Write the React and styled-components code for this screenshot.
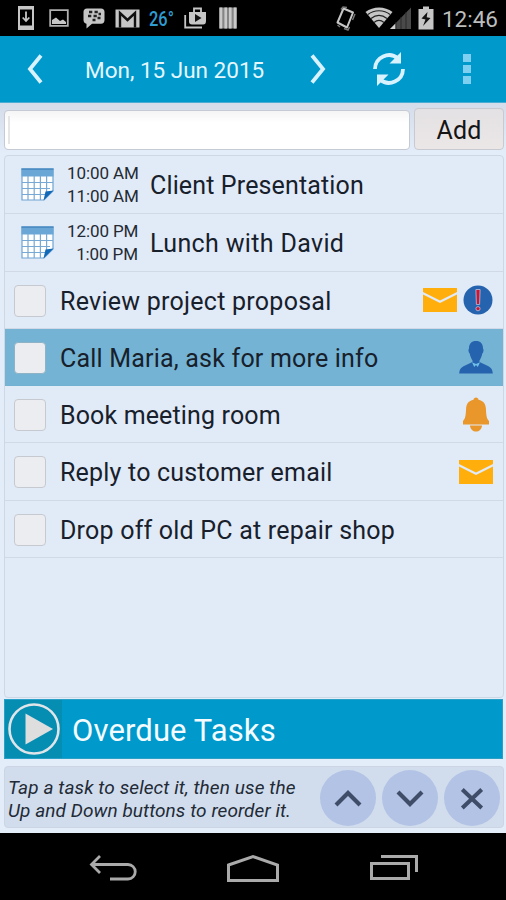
import React from 'react';
import { styled, createGlobalStyle } from 'styled-components';

const events = [
  { start: '10:00 AM', end: '11:00 AM', title: 'Client Presentation', spacing: 0.14 },
  { start: '12:00 PM', end: '1:00 PM', title: 'Lunch with David', spacing: 0.35 },
];

const tasks = [
  { title: 'Review project proposal', icons: ['mail', 'alert'], height: 57, spacing: 0.26 },
  { title: 'Call Maria, ask for more info', icons: ['contact'], selected: true, height: 57, spacing: 0.2 },
  { title: 'Book meeting room', icons: ['bell'], height: 57, spacing: 0.14 },
  { title: 'Reply to customer email', icons: ['mail'], height: 58, spacing: 0.2 },
  { title: 'Drop off old PC at repair shop', icons: [], height: 57, spacing: 0.21 },
];

const MailIcon = () => (
  <svg width="34" height="24" viewBox="0 0 34 24">
    <path d="M0 0H34V4L17 12.5L0 4Z" fill="#ffae0c" />
    <path d="M0 6.5L17 15L34 6.5V24H0Z" fill="#ffae0c" />
  </svg>
);

const AlertIcon = () => (
  <svg width="30" height="30" viewBox="0 0 30 30">
    <circle cx="15" cy="15" r="14.5" fill="#2563ae" />
    <path d="M12.9 4.5H17.1L16.6 19.5H13.4Z" fill="#cf1430" stroke="#a9b5d8" strokeWidth="0.9" />
    <circle cx="15" cy="23.7" r="2.1" fill="#cf1430" stroke="#a9b5d8" strokeWidth="0.9" />
  </svg>
);

const ContactIcon = () => (
  <svg width="34" height="34" viewBox="0 0 34 34">
    <path
      d="M17 1C21.5 1 24 3.5 24 8.5C25 9.5 24.5 12.5 23.3 13.5C22.7 16.5 21.5 19 20.5 20.5V22L29 26C32.5 27.8 33.5 30 33.8 33.5H0.2C0.5 30 1.5 27.8 5 26L13.5 22V20.5C12.5 19 11.3 16.5 10.7 13.5C9.500 12.500 9 9.500 10 8.500C10 3.500 12.500 1 17 1Z"
      fill="#2563ae"
    />
    <path d="M13 22.300L17 24L21 22.300L18.800 27L17 25L15.200 27Z" fill="#6fc0e8" />
  </svg>
);

const BellIcon = () => (
  <svg width="28" height="35" viewBox="0 0 28 35">
    <path
      d="M14 0.5C15.5 0.5 16.3 1.5 16.5 2.700C21.500 3.700 23.700 7 23.900 11.500C24.200 18 24.500 21.500 27 24V27.500H1V24C3.500 21.500 3.800 18 4.100 11.500C4.300 7 6.500 3.700 11.500 2.700C11.700 1.500 12.500 0.500 14 0.500Z"
      fill="#e9962b"
    />
    <path d="M8 28.500H20C19.500 32.500 17 34.500 14 34.500C11 34.500 8.500 32.500 8 28.500Z" fill="#e9962b" />
  </svg>
);

const taskIcons = {
  mail: MailIcon,
  alert: AlertIcon,
  contact: ContactIcon,
  bell: BellIcon,
};

const CalendarIcon = () => (
  <svg width="33" height="33" viewBox="0 0 33 33">
    <path d="M1 1H32V23L23 32H1Z" fill="#fff" stroke="#6fa4d3" strokeWidth="1.2" />
    <path d="M0.5 0.5H32.5V8.5H0.5Z" fill="#6ba7d6" />
    <path d="M0.5 0.5H32.5V1.8H0.5Z" fill="#4585bd" />
    <path
      d="M1 14.5H32M1 20.5H29M1 26.5H24M7 8V32M13.2 8V32M19.4 8V32M25.6 8V24"
      stroke="#78a9d5"
      strokeWidth="1.2"
      fill="none"
    />
    <path d="M22.5 32.5L24.5 23.5L32.5 22.5Z" fill="#1269b8" />
  </svg>
);

const StatusLeft = () => (
  <LeftIcons>
    <svg width="18" height="26" viewBox="0 0 18 26">
      <path d="M1 1H17V25H1Z" fill="#c6c6c6" />
      <path d="M3 4.5H15V20.5H3Z" fill="#000" />
      <path d="M9 6.5V16M5.7 12.5L9 16L12.3 12.5" fill="none" stroke="#c6c6c6" strokeWidth="1.8" />
    </svg>
    <svg width="20" height="18" viewBox="0 0 20 18">
      <path d="M1.2 1.2H18.8V16.8H1.2Z" fill="none" stroke="#b0b0b0" strokeWidth="1.8" />
      <path d="M3 15V11L7 8.5L11 12L14 10.5L17 13V15Z" fill="#c6c6c6" />
    </svg>
    <svg width="22" height="21" viewBox="0 0 22 21">
      <path d="M4 0.5H18Q21.5 0.5 21.5 4V12Q21.5 15.7 18 15.7H9L3.5 20.5V15.7Q0.5 15 0.5 12V4Q0.5 0.5 4 0.5Z" fill="#c6c6c6" />
      <path d="M6 4H9.3M11.5 4H14.8M5 8H8.3M10.5 8H13.8M15.5 6H18M9.5 12H12.5M14.5 10H17.5" stroke="#222" strokeWidth="2.4" />
    </svg>
    <svg width="25" height="19" viewBox="0 0 25 19">
      <path d="M0.5 0.5H24.5V18.5H0.5Z" fill="#c6c6c6" />
      <path d="M5 18.5V4L12.5 11L20 4V18.5" fill="none" stroke="#111" strokeWidth="2.4" />
    </svg>
    <Temperature>26°</Temperature>
    <svg width="23" height="22" viewBox="0 0 23 22">
      <path d="M1.2 8V20.5H18" fill="none" stroke="#c6c6c6" strokeWidth="1.8" />
      <path d="M5 5H22V14Q22 17.5 19 17.5H8Q5 17.5 5 14.5Z" fill="#c6c6c6" />
      <path d="M10 5V1.5H17V5" fill="none" stroke="#c6c6c6" strokeWidth="1.8" />
      <path d="M11 7L17.5 11L11 15Z" fill="#111" />
    </svg>
    <svg width="18" height="22" viewBox="0 0 18 22">
      <path d="M0 0.5H18V21.5H0Z" fill="#858585" />
      <path d="M2 0.5V21.5M6.7 0.5V21.5M11.3 0.5V21.5M16 0.5V21.5" stroke="#c9c9c9" strokeWidth="2.6" />
    </svg>
  </LeftIcons>
);

const StatusRight = () => (
  <RightIcons>
    <svg width="22" height="25" viewBox="0 0 22 25">
      <path d="M8.5 2.5L18 6.5L12 21.5L2.5 16.5Z" fill="none" stroke="#c6c6c6" strokeWidth="2" strokeLinejoin="round" />
      <path d="M6 3.5L8 1L12 1.5M20 8L17.5 14M2.5 19L5 21M9 22.5L13 24L14.5 21" fill="none" stroke="#777" strokeWidth="1.5" />
    </svg>
    <Wifi width="47" height="23" viewBox="0 0 47 23">
      <path d="M14 21L0.5 5C8 -1 20 -1 27.5 5Z" fill="#c6c6c6" />
      <path d="M3 7.5C9 2.5 19 2.5 25 7.5M6 11.5C11 7.5 17 7.5 22 11.5M9 15.5C12 13 16 13 19 15.5" fill="none" stroke="#222" strokeWidth="1.2" />
      <path d="M46 0.5V22H25Z" fill="#4a4a4a" />
      <path d="M30.5 16.5V22H25Z" fill="#d0d0d0" />
      <path d="M31 15V22M36 10V22M41 5V22" stroke="#2b2b2b" strokeWidth="1" />
    </Wifi>
    <svg width="16" height="24" viewBox="0 0 16 24">
      <path d="M5 0.5H11V3H15.5V23.5H0.5V3H5Z" fill="#c6c6c6" />
      <path d="M9.5 6L3.5 12.5L7.5 13.5L5 20L12.5 12L8.7 11.2Z" fill="#111" />
    </svg>
    <Clock>12:46</Clock>
  </RightIcons>
);

const App = () => (
  <Screen>
    <GlobalStyle />
    <StatusBar>
      <StatusLeft />
      <StatusRight />
    </StatusBar>
    <Header>
      <svg width="16" height="30" viewBox="0 0 16 30">
        <path d="M14 1.5L3 15L14 28.5" fill="none" stroke="#d8f3ff" strokeWidth="3.8" />
      </svg>
      <DateLabel>Mon, 15 Jun 2015</DateLabel>
      <svg width="16" height="30" viewBox="0 0 16 30">
        <path d="M2 1.5L13 15L2 28.5" fill="none" stroke="#d8f3ff" strokeWidth="3.8" />
      </svg>
      <RefreshIcon width="34" height="36" viewBox="0 0 34 36">
        <path d="M3 18A14 14 0 0 1 26 7.5M31 18A14 14 0 0 1 8 28.5" fill="none" stroke="#d8f3ff" strokeWidth="3.8" />
        <path d="M29 1V12.5H17.5ZM5 35V23.5H16.5Z" fill="#d8f3ff" />
      </RefreshIcon>
      <Dots>
        <Dot />
        <Dot />
        <Dot />
      </Dots>
    </Header>
    <Content>
      <AddForm>
        <Field>
          <Cursor />
        </Field>
        <AddButton>Add</AddButton>
      </AddForm>
      <List>
        {events.map((event) => (
          <Row key={event.title} $height={58}>
            <CalendarBox>
              <CalendarIcon />
            </CalendarBox>
            <Times>
              <span>{event.start}</span>
              <span>{event.end}</span>
            </Times>
            <Title $spacing={event.spacing}>{event.title}</Title>
          </Row>
        ))}
        {tasks.map((task) => (
          <Row key={task.title} $height={task.height} $selected={task.selected}>
            <Checkbox $selected={task.selected} />
            <Title $spacing={task.spacing}>{task.title}</Title>
            <Icons $wide={task.icons[0] === 'bell'}>
              {task.icons.map((name) => {
                const Icon = taskIcons[name];
                return <Icon key={name} />;
              })}
            </Icons>
          </Row>
        ))}
      </List>
      <Overdue>
        <PlayBox>
          <svg width="54" height="54" viewBox="0 0 54 54">
            <circle cx="27" cy="27" r="24.5" fill="none" stroke="#dfe5e8" strokeWidth="2.6" />
            <path d="M18.5 11.5L46 27L18.5 42.5Z" fill="#dedede" />
          </svg>
        </PlayBox>
        <OverdueText>Overdue Tasks</OverdueText>
      </Overdue>
      <Footer>
        <Hint>
          <HintLine $spacing={0.1}>Tap a task to select it, then use the</HintLine>
          <HintLine $spacing={0.07}>Up and Down buttons to reorder it.</HintLine>
        </Hint>
        <RoundButton>
          <svg width="28" height="28" viewBox="0 0 28 28">
            <path d="M2 21L14 9L26 21" fill="none" stroke="#3f4d69" strokeWidth="4.2" />
          </svg>
        </RoundButton>
        <RoundButton>
          <svg width="28" height="28" viewBox="0 0 28 28">
            <path d="M2 8L14 20L26 8" fill="none" stroke="#3f4d69" strokeWidth="4.2" />
          </svg>
        </RoundButton>
        <RoundButton>
          <svg width="28" height="28" viewBox="0 0 28 28">
            <path d="M4.3 5.5L23.7 24M23.7 5.5L4.3 24" fill="none" stroke="#3f4d69" strokeWidth="4" />
          </svg>
        </RoundButton>
      </Footer>
    </Content>
    <NavBar>
      <svg width="48" height="28" viewBox="0 0 48 28">
        <path d="M11 2L2.5 10.5L11 19M3 10.5H39A7.2 7.2 0 0 1 39 25H21" fill="none" stroke="#aaa" strokeWidth="2.8" />
      </svg>
      <svg width="54" height="29" viewBox="0 0 54 29">
        <path d="M2.5 11L27 2.5L51.5 11V26.5H2.5Z" fill="none" stroke="#aaa" strokeWidth="3" />
      </svg>
      <svg width="50" height="28" viewBox="0 0 50 28">
        <path d="M2.5 9.5H39.5V24.5H2.5Z" fill="none" stroke="#aaa" strokeWidth="3" />
        <path d="M12 2.5H47.5V18" fill="none" stroke="#aaa" strokeWidth="3" />
      </svg>
    </NavBar>
  </Screen>
);

export default App;

const GlobalStyle = createGlobalStyle`
  * {
    box-sizing: border-box;
  }

  body {
    margin: 0;
    background: #000;
    font-family: Roboto, "Liberation Sans", sans-serif;
  }

  svg {
    display: block;
    flex-shrink: 0;
  }
`;

const Screen = styled.div`
  display: flex;
  flex-direction: column;
  width: 506px;
  height: 900px;
  overflow: hidden;
`;

const StatusBar = styled.div`
  display: flex;
  align-items: center;
  justify-content: space-between;
  height: 36px;
  padding: 0 8px 0 17px;
  background: #000;
`;

const LeftIcons = styled.div`
  display: flex;
  align-items: center;
  gap: 12px;

  svg:nth-of-type(1) {
    margin-right: 2px;
  }

  svg:nth-of-type(2) {
    margin-right: 2px;
  }

  svg:nth-of-type(3) {
    margin-right: -2px;
  }
`;

const Temperature = styled.span`
  width: 25px;
  margin: 2px -2px 0 -3px;
  color: #2f9bd0;
  font-size: 20px;
  font-weight: 500;
  line-height: 24px;
  transform: scaleX(0.82);
  transform-origin: left;
`;

const RightIcons = styled.div`
  display: flex;
  align-items: center;
`;

const Wifi = styled.svg`
  margin: 0 6px 0 8px;
`;

const Clock = styled.span`
  margin-left: 8px;
  color: #bdbdbd;
  font-size: 22.5px;
  line-height: 28px;
  margin-top: 2px;
`;

const Header = styled.div`
  display: flex;
  align-items: center;
  height: 67px;
  padding: 0 0 0 27px;
  border-bottom: 1px solid #4aaed4;
  background: #0099cc;
`;

const DateLabel = styled.span`
  width: 267px;
  padding: 2px 0 0 42px;
  color: #e4f7ff;
  font-size: 22.5px;
  white-space: nowrap;
`;

const RefreshIcon = styled.svg`
  margin: 0 57px 0 46px;
`;

const Dots = styled.div`
  display: flex;
  flex-direction: column;
  gap: 3px;
`;

const Dot = styled.div`
  width: 8px;
  height: 8px;
  background: #7fd0f0;
`;

const Content = styled.div`
  display: flex;
  flex-direction: column;
  height: 730px;
  padding: 5px 2px 0 4px;
  background: linear-gradient(#d5dcea, #e3edf9 50px);
`;

const AddForm = styled.div`
  display: flex;
  align-items: flex-end;
  gap: 4px;
`;

const Field = styled.div`
  width: 406px;
  height: 40px;
  padding: 5px 3px;
  border: 1px solid #c5cad4;
  border-radius: 4px;
  background: linear-gradient(#f5f5f5, #fff 12px);
`;

const Cursor = styled.div`
  width: 2px;
  height: 28px;
  background: #e6e6e6;
`;

const AddButton = styled.div`
  width: 90px;
  height: 42px;
  padding-top: 1px;
  border: 1px solid #c9c9d0;
  border-radius: 4px;
  background: linear-gradient(#e4e1e4, #ebe7e7);
  color: #151515;
  font-size: 25px;
  line-height: 41px;
  letter-spacing: 0.2px;
  text-align: center;
`;

const List = styled.div`
  width: 500px;
  height: 543px;
  margin-top: 5px;
  border: 1px solid #ced7e4;
  border-radius: 4px;
  background: #e1eaf7;
`;

const Row = styled.div`
  display: flex;
  align-items: center;
  height: ${({ $height }) => $height}px;
  padding: 0 9px 0 8px;
  border-bottom: 1px solid ${({ $selected }) => ($selected ? '#72b1d2' : '#d0d9e5')};
  background: ${({ $selected }) => ($selected ? '#74b3d3' : 'transparent')};
`;

const CalendarBox = styled.div`
  width: 54px;
  padding: 0 0 1px 8px;
`;

const Times = styled.div`
  display: flex;
  flex-direction: column;
  width: 71px;
  margin-right: 12px;
  padding-top: 1px;
  color: #242a33;
  font-size: 17px;
  line-height: 23px;
  letter-spacing: -0.1px;
  text-align: right;
  white-space: nowrap;
`;

const Title = styled.span`
  padding-top: 2px;
  color: #17202b;
  font-size: 25px;
  letter-spacing: ${({ $spacing }) => $spacing}px;
  white-space: nowrap;
`;

const Checkbox = styled.div`
  width: 32px;
  height: 32px;
  margin-top: 1px;
  margin-right: 14px;
  margin-left: 1px;
  border: 1.5px solid ${({ $selected }) => ($selected ? '#8fb3c6' : '#c6cad0')};
  border-radius: 4px;
  background: #ecedf0;
`;

const Icons = styled.div`
  display: flex;
  align-items: center;
  gap: 6px;
  margin-left: auto;
  padding-right: ${({ $wide }) => ($wide ? 4 : 1)}px;
`;

const Overdue = styled.div`
  display: flex;
  align-items: center;
  width: 499px;
  height: 60px;
  margin-top: 1px;
  border: 1px solid #2a9fc8;
  background: #0099cc;
`;

const PlayBox = styled.div`
  display: flex;
  align-items: center;
  justify-content: center;
  width: 57px;
  height: 58px;
  padding-left: 1px;
  background: #058db2;
`;

const OverdueText = styled.span`
  padding: 2px 0 0 10px;
  color: #f4fcff;
  font-size: 31px;
  letter-spacing: 0.12px;
  white-space: nowrap;
`;

const Footer = styled.div`
  display: flex;
  align-items: center;
  gap: 6px;
  width: 500px;
  height: 62px;
  margin-top: 7px;
  padding: 1px 3px 0;
  border: 1px solid #cbd5e3;
  border-radius: 4px;
  background: #d1dded;
`;

const Hint = styled.div`
  width: 306px;
  padding-top: 3px;
`;

const HintLine = styled.div`
  color: #222a35;
  font-size: 19px;
  font-style: italic;
  line-height: 23px;
  letter-spacing: ${({ $spacing }) => $spacing}px;
  white-space: nowrap;
`;

const RoundButton = styled.div`
  display: flex;
  align-items: center;
  justify-content: center;
  width: 56px;
  height: 56px;
  border-radius: 50%;
  background: #b3c3e5;
`;

const NavBar = styled.div`
  display: flex;
  align-items: center;
  flex: 1;
  gap: 89px;
  padding: 3px 0 0 89px;
  background: #000;
`;
